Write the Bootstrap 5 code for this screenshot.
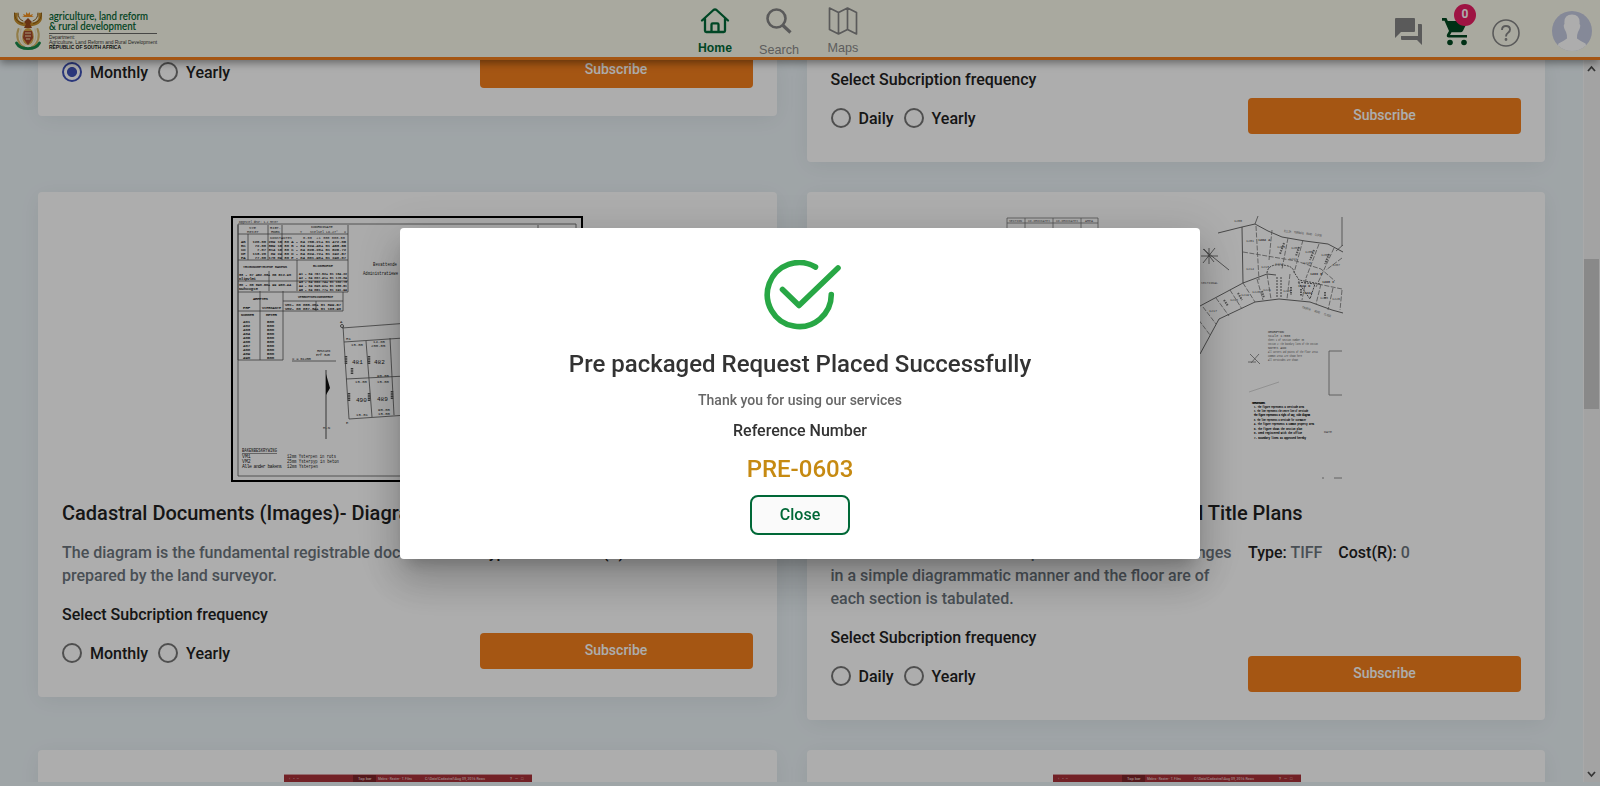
<!DOCTYPE html>
<html lang="en">
<head>
<meta charset="utf-8">
<meta name="viewport" content="width=device-width, initial-scale=1">
<title>Subscriptions</title>
<link rel="stylesheet" href="https://cdn.jsdelivr.net/npm/bootstrap@5.3.0/dist/css/bootstrap.min.css">
<style>
html,body{height:100%;overflow:hidden}
body{font-family:Roboto,sans-serif;font-size:16px;font-weight:500;line-height:23px;color:#212121;background:#ebf3f7}
svg text{white-space:pre}
.topbar{height:60px;background:#fafaeb;border-bottom:3px solid #f37f1d;box-shadow:0 3px 8px rgba(0,0,0,.4);z-index:5;position:relative}
.brand{width:160px;margin-left:13px;margin-top:11px}
.tabs-nav{font-family:"Liberation Sans",sans-serif;font-size:12.6px;line-height:14px;color:#8a8a8a;width:200px;margin-left:510px}
.tabs-nav a{width:64px;color:inherit;text-decoration:none;text-align:center;display:block}
.tabs-nav .active{color:#006837;font-size:12.2px}
.tabs-nav svg,.tools svg{display:block}
.tabs-nav svg{margin:0 auto}
.tools{width:206px}
.count-dot{position:absolute;left:12px;top:-14px;width:22px;height:22px;border-radius:50%;background:#e91e63;color:#fff;font-size:12px;font-weight:700;line-height:21px;text-align:center}
.viewport-area{height:722px;overflow:hidden}
.plans{padding-left:38px;width:1545px;display:grid;grid-template-columns:738.5px 738.5px;column-gap:30px;row-gap:30px;align-items:start}
.plan{background:#fff;border-radius:4px;padding:24px 24px 28px;box-shadow:0 4px 22px rgba(0,0,0,.06)}
.plan.cut{border-radius:0 0 4px 4px;padding-top:0}
.plan h2{font-size:20px;font-weight:500;line-height:24px;margin:19px 0 16px;white-space:nowrap;color:#212121}
.thumb{display:block;margin:0 auto}
.about{width:417.5px;padding-right:12px;color:#6c757d}
.freq{margin-top:16px}
.pick{height:20px;gap:8px;margin-right:10px}
.ring{width:20px;height:20px;border:2px solid #757575;border-radius:50%}
.ring.on{border-color:#3f51b5;background:radial-gradient(circle,#3f51b5 4.6px,transparent 5.4px)}
.choose{margin-top:7px;height:36px}
.choose .picks{width:417.5px;padding-top:4px}
.btn-sub{flex:1;height:36px;border:0;border-radius:4px;background:#f37f1d;color:#fff;font-size:14px;font-weight:500;line-height:32px;padding:0 0 2px}
.rail{width:17px;background:#f1f1f1;border-left:1px solid #fafafa}
.grip{width:15px;height:150px;margin-top:183px;background:#cacaca}
.modal-backdrop{--bs-backdrop-opacity:.32}
.modal-dialog{max-width:800px;width:800px;margin:228px auto 0}
.modal-content{height:331px;border:0;border-radius:4px;color:#333;text-align:center;box-shadow:0 11px 15px -7px rgba(0,0,0,.2),0 24px 38px 3px rgba(0,0,0,.14),0 9px 46px 8px rgba(0,0,0,.12)}
.modal-content h1{font-size:24px;font-weight:500;line-height:30px;margin:18px 0 0}
.done-mark{margin:32px 0 0 6px}
.thanks{font-size:14px;line-height:20px;color:#666;margin-top:11px}
.reflabel{margin-top:9px}
.refno{font-size:24px;line-height:30px;color:#c68a12;margin-top:12px}
.btn-done{width:100px;height:40px;margin-top:11px;border:2px solid #006837;border-radius:8px;background:#fafafa;color:#006837;font-size:16px;font-weight:500;padding:0 0 2px}
</style>
</head>
<body>
<header class="topbar d-flex align-items-start">
  <svg class="brand overflow-visible" height="42" viewBox="0 0 160 42">
    <g fill="none" stroke-linecap="round">
      <path d="M3 3.500C1.500 9 5 13 12 13.500M27 3.500c1.500 5.500-2 9.500-9 10" stroke="#c8902c" stroke-width="3.600"/>
      <path d="M1.500 2c0 6 3 9 8 10.500M28.500 2c0 6-3 9-8 10.500M5 2c0 4 2 7 5 8M25 2c0 4-2 7-5 8" stroke="#8a5a16" stroke-width="1"/>
      <path d="M5.500 18c-3 7-.5 15 5.500 18M24.500 18c3 7 .5 15-5.500 18" stroke="#d8b86a" stroke-width="2"/>
      <path d="M8 18c-2 7 0 13 4 16M22 18c2 7 0 13-4 16" stroke="#f1e6c4" stroke-width="1.400"/>
      <path d="M3.500 32c4 7.500 19 7.500 23 0" stroke="#1a8a4a" stroke-width="2.800"/>
    </g>
    <path d="M9 6l2-1-1-2 3 1 0-3 2 2 2-2 0 3 3-1-1 2 2 1z" fill="#f39322"/>
    <path d="M15 7l4 4-2 2 2 4h-8l2-4-2-2z" fill="#9a4a1c"/>
    <ellipse cx="15" cy="25.500" rx="5.800" ry="8.500" fill="#d9a648"/>
    <path d="M11 20h8l1 7-5 7-5-7z" fill="#a5472b"/>
    <path d="M12 22h6M12 25h6M13 28h4" stroke="#f3e2b0"/>
    <g font-family="'Gill Sans','Lato',sans-serif" font-size="10.500" fill="#00622f" stroke="#00622f" stroke-width=".1">
      <text x="36" y="9.300" textLength="99" lengthAdjust="spacingAndGlyphs">agriculture, land reform</text>
      <text x="36" y="19" textLength="87" lengthAdjust="spacingAndGlyphs">&amp; rural development</text>
    </g>
    <path d="M36 22.500h108" stroke="#444" stroke-width=".8"/>
    <g font-family="'Liberation Sans',sans-serif" font-size="4.900" fill="#333">
      <text x="36" y="27.700" textLength="26">Department:</text>
      <text x="36" y="33" textLength="108" lengthAdjust="spacingAndGlyphs">Agriculture, Land Reform and Rural Development</text>
      <text x="36" y="38.300" font-weight="700" fill="#111" textLength="72" lengthAdjust="spacingAndGlyphs">REPUBLIC OF SOUTH AFRICA</text>
    </g>
  </svg>
  <nav class="tabs-nav d-flex">
    <a href="#" class="fw-bold active"><svg width="30" height="41" viewBox="0 0 30 41" fill="none" stroke="#006837" stroke-width="2.300" stroke-linejoin="round" stroke-linecap="round"><path d="M2 20.500L13.500 10q1.500-1.200 3 0L28 20.500M5 18.500v12.200q0 1.300 1.300 1.300h17.400q1.300 0 1.300-1.300V18.500M11.500 32v-7.500q0-1.200 1.200-1.200h4.600q1.200 0 1.200 1.200V32"/></svg>Home</a>
    <a href="#"><svg width="30" height="43" viewBox="0 0 30 43" fill="none" stroke="#858585" stroke-width="2.600"><circle cx="12.500" cy="18.500" r="9"/><path d="M18.500 25l8 7.500" stroke-width="3.200"/></svg>Search</a>
    <a href="#"><svg width="30" height="41" viewBox="0 0 30 41" fill="none" stroke="#858585" stroke-width="1.700" stroke-linejoin="round"><path d="M1.500 8l9 4.500 9-4.500 9 4.500V34l-9-4.500-9 4.500-9-4.500zM10.500 12.500V34M19.500 8v21.500"/></svg>Maps</a>
  </nav>
  <div class="tools d-flex ms-auto">
    <svg width="28" height="28" viewBox="0 0 28 28" fill="#858585" style="margin-top:17px"><path d="M2 1h18q1 0 1 1v12q0 1-1 1H7l-6 6V2q0-1 1-1z"/><path d="M24 7h3q1 0 1 1v20l-5-5H8q-1 0-1-1v-3h17z"/></svg>
    <div class="position-relative" style="margin:18px 0 0 20px"><svg width="26" height="28" viewBox="0 0 26 28" fill="#00471f"><path d="M0 0h4.500l1.300 3H24q1.600 0 1 1.800l-4 8q-.8 1.500-2.400 1.500H9.500L8 17h17v2.600H7q-3-.4-2-3.200l2-3.300L2.500 2.700H0z"/><circle cx="8" cy="24.500" r="2.800"/><circle cx="22" cy="24.500" r="2.800"/></svg><span class="count-dot">0</span></div>
    <svg width="28" height="28" viewBox="0 0 28 28" fill="none" stroke="#858585" stroke-width="1.600" style="margin:19px 0 0 24px"><circle cx="14" cy="14" r="13"/><path d="M10 11q0-4 4-4t4 3.500q0 2-2 3.200-2 1.200-2 3.800" stroke-width="1.900"/><circle cx="14" cy="20.500" r=".6"/></svg>
    <svg width="40" height="40" viewBox="0 0 40 40" style="margin:11px 0 0 32px"><defs><clipPath id="face"><circle cx="20" cy="20" r="20"/></clipPath></defs><g clip-path="url(#face)"><path fill="#c5cae0" d="M0 0h40v40H0z"/><path fill="#fff" d="M20 3.500q8.500 0 7.500 9.500 1.500 1 0 5-1 2-1.500 3-1 2-1 6.500 4 3 8.500 5l2.500 8H4l2.500-8q4.500-2 8.500-5 0-4.500-1-6.500-.5-1-1.500-3-1.500-4 0-5-1-9.500 7.500-9.500z"/></g></svg>
  </div>
</header>

<div class="d-flex viewport-area">
<main class="flex-grow-1">
 <div class="plans">
  <section class="plan cut">
    <div class="choose d-flex" style="margin-top:-8px"><div class="picks d-flex align-items-center"><label class="pick d-flex align-items-center"><span class="ring on"></span>Monthly</label><label class="pick d-flex align-items-center"><span class="ring"></span>Yearly</label></div><button class="btn-sub">Subscribe</button></div>
  </section>
  <section class="plan cut" style="padding-top:8px">
    <div>Select Subcription frequency</div>
    <div class="choose d-flex"><div class="picks d-flex align-items-center"><label class="pick d-flex align-items-center"><span class="ring"></span>Daily</label><label class="pick d-flex align-items-center"><span class="ring"></span>Yearly</label></div><button class="btn-sub">Subscribe</button></div>
  </section>

  <section class="plan">
    <svg class="thumb" width="352" height="266" viewBox="0 0 352 266">
      <path fill="#fdfdfd" stroke="#000" stroke-width="2" d="M1 1h350v264H1z"/>
      <g fill="none" stroke="#555" stroke-width=".8">
        <path d="M7 8h338v252H7zM7 18h110M7 44h110M7 65h110M7 76h110M7 9v135M37 9v35M51 9v35M66 44v31M117 9v67M112 76v19H52M29 75v69M52 75v69M7 95h45M7 144h45M38 55v20M52 85h60M85 85v10M307 9v12M17 18v26"/>
        <path d="M111 112l241-18M112 110l1 16 5 77 234-16M113 126l239-16M115 163l120-6M135 125l6 76M159 122l4 77M61 145h44"/>
        <path d="M95 154v69" stroke="#222"/>
        <path d="M115 140v8M138 140v8M118 177v8M138 177v8M161 175v8M121 152v6" stroke-dasharray="1.500 .7" stroke-width="2.500"/>
      </g>
      <path fill="#111" d="M95 158l4 14-4 7z"/><circle cx="111" cy="110" r="1.500" fill="#fff" stroke="#222" stroke-width=".7"/>
      <g font-family="'Liberation Mono',monospace" font-size="4" fill="#222">
        <text x="8" y="7" textLength="39" lengthAdjust="spacingAndGlyphs">Opgestel deur: 1.2 Meter</text><text x="18" y="13">SYE</text><text x="16" y="17">Meter</text>
        <text x="39" y="13" textLength="11" lengthAdjust="spacingAndGlyphs">RIGT.</text><text x="40" y="17" textLength="9">HOEK</text><text x="80" y="12" textLength="22">KOORDINATE</text><text x="69" y="17" textLength="46" lengthAdjust="spacingAndGlyphs">Y    Stelsel Lo.27°   X</text>
        <text x="39" y="22.500" textLength="75" lengthAdjust="spacingAndGlyphs">KONSTANTES     0.00  +1 300 000.00</text>
        <g stroke="#222" stroke-width=".15">
        <text x="10" y="27" textLength="105" lengthAdjust="spacingAndGlyphs">AB   120.00 269 15 30 A - 84 705.21+ 61 472.85</text>
        <text x="10" y="31" textLength="105" lengthAdjust="spacingAndGlyphs">BC    72.00 359 15 30 B - 84 824.48+ 61 453.55</text>
        <text x="10" y="35" textLength="105" lengthAdjust="spacingAndGlyphs">CD     7.07 314 15 30 C - 84 825.20+ 61 525.72</text>
        <text x="10" y="39" textLength="105" lengthAdjust="spacingAndGlyphs">DE   113.20  89 24 30 D - 84 824.72+ 61 242.57</text>
        <text x="10" y="43" textLength="105" lengthAdjust="spacingAndGlyphs">EA    77.00 176 09 30 E - 84 801.90+ 61 248.07</text>
        <text x="68" y="59" textLength="48" lengthAdjust="spacingAndGlyphs">A1 - 84 757.62+ 61 164.22</text>
        <text x="68" y="63" textLength="48" lengthAdjust="spacingAndGlyphs">A2 - 84 867.41+ 61 178.04</text>
        <text x="68" y="67" textLength="48" lengthAdjust="spacingAndGlyphs">A3 - 84 862.74+ 61 182.73</text>
        <text x="68" y="71" textLength="48" lengthAdjust="spacingAndGlyphs">A4 - 84 890.92+ 61 236.51</text>
        <text x="68" y="75" textLength="48" lengthAdjust="spacingAndGlyphs">A5 - 84 851.77+ 61 241.94</text>
        <text x="12" y="52" textLength="44" lengthAdjust="spacingAndGlyphs">TRIGONOMETRIESE BAKENS</text><text x="82" y="51" textLength="20" lengthAdjust="spacingAndGlyphs">BLOKHOEKE</text>
        <text x="8" y="59.500" textLength="52" lengthAdjust="spacingAndGlyphs">33 - 87 452.03+ 85 512.90</text><text x="8" y="64.200" textLength="17">Klipvlei</text><text x="8" y="69.500" textLength="52" lengthAdjust="spacingAndGlyphs">30 - 86 690.50+ 99 960.44</text><text x="8" y="74.200" textLength="19">Nuhoogte</text>
        <text x="22" y="84" textLength="15">AREETES</text><text x="67" y="82" textLength="35" lengthAdjust="spacingAndGlyphs">VERBKEYKENINGSMERKE</text><text x="54" y="89.500" textLength="56" lengthAdjust="spacingAndGlyphs">VM1- 80 866.20+ 61 399.57</text><text x="54" y="94" textLength="56" lengthAdjust="spacingAndGlyphs">VM2- 80 837.34+ 61 183.90</text>
        <text x="12" y="93">ERF</text><text x="31" y="93" textLength="19" lengthAdjust="spacingAndGlyphs">VIERKANTE</text><text x="10" y="100" textLength="13" lengthAdjust="spacingAndGlyphs">NOMMER</text><text x="35" y="100" textLength="11">METER</text>
        <text x="12" y="107">481       500</text><text x="12" y="111">482       500</text><text x="12" y="115">483       500</text><text x="12" y="119">484       500</text><text x="12" y="123">485       500</text><text x="12" y="127">486       500</text><text x="12" y="131">487       500</text><text x="12" y="135">488       500</text><text x="12" y="139">489       500</text><text x="12" y="143">490       500</text>
        </g>
        <text x="142" y="50" font-size="5" textLength="24" lengthAdjust="spacingAndGlyphs">Bevattende</text><text x="132" y="59" font-size="5" textLength="35" lengthAdjust="spacingAndGlyphs">Administratiewe</text>
        <text x="61" y="144" textLength="19">X = 61200</text><text x="86" y="135.500" textLength="14">Restant</text><text x="85" y="140" textLength="14">Erf 320</text>
        <text x="109" y="107">A</text><text x="115" y="124">H1</text><text x="120" y="130">15.00</text><text x="142" y="127">14.85</text><text x="140" y="131">200.05</text><text x="124" y="167">15.00</text><text x="146" y="161">90.05</text><text x="146" y="167">15.00</text><text x="125" y="200">15.01</text><text x="147" y="195">90.05</text><text x="147" y="199">15.00</text>
        <text x="121" y="148" font-size="6">481</text><text x="143" y="148" font-size="6">482</text><text x="125" y="186" font-size="6">490</text><text x="146" y="185" font-size="6">489</text>
        <text x="115" y="208">E</text><text x="92" y="213">M.N</text>
        <g font-size="4.800"><text x="11" y="236" text-decoration="underline" textLength="35" lengthAdjust="spacingAndGlyphs">BAKENBESKRYWING</text><text x="11" y="241.500">VM1</text><text x="56" y="241.500" textLength="49" lengthAdjust="spacingAndGlyphs">12mm Ysterpen in rots</text><text x="11" y="246.500">VM2</text><text x="56" y="246.500" textLength="52" lengthAdjust="spacingAndGlyphs">25mm Ysterpyp in beton</text><text x="11" y="251.500" textLength="40">Alle ander bakens</text><text x="56" y="251.500" textLength="31" lengthAdjust="spacingAndGlyphs">12mm Ysterpen</text></g>
      </g>
    </svg>
    <h2>Cadastral Documents (Images)- Diagrams</h2>
    <div class="d-flex"><div class="about">The diagram is the fundamental registrable document prepared by the land surveyor.</div><div>Type: <span class="text-secondary">TIFF</span><span class="ms-3">Cost(R):</span> <span class="text-secondary">0</span></div></div>
    <div class="freq">Select Subcription frequency</div>
    <div class="choose d-flex"><div class="picks d-flex align-items-center"><label class="pick d-flex align-items-center"><span class="ring"></span>Monthly</label><label class="pick d-flex align-items-center"><span class="ring"></span>Yearly</label></div><button class="btn-sub">Subscribe</button></div>
  </section>

  <section class="plan">
    <svg class="thumb" width="352" height="266" viewBox="0 0 352 266">
      <g fill="none" stroke="#777" stroke-width=".8">
        <path d="M7 12V2h91v10M7 7h91M25 2v10M53 2v10M81 2v10"/>
        <path d="M218 17l24-6 13-3 13 7 14 6 23 4 23 3 15 8M242 11l1 56-43 23-24 26M243 67l24-9 9 1M200 138l19-35 36-17 24-3 31 3 22 8 11 3" stroke="#444"/>
        <path d="M342 1v29M255 8l3-8M336 35l7-6" stroke="#666"/>
        <path d="M203 33l26 21M203 47l12-15M204 33l10 13M201 40h17M209 32v16" stroke="#555"/>
        <path stroke-dasharray="5 1.500" d="M243 36l24 4 29 5 25 8 14 12M256 10l3 54M272 14l-3 30M288 22l-6 31M303 24l-9 33M319 28l-13 34M334 32l-18 39M342 42l-16 12M267 58l4 25M257 63l6 21M243 67l12 19M230 74l12 19M216 82l13 18M203 91l13 17M195 99l15 20M290 58l-3 25M306 63l-4 21M321 68l-5 20M333 72l-5 22M342 74l-2 20M318 68l24 5"/>
        <path stroke-dasharray="2 1" d="M267 57q1-9 13-8 13 0 14 7l5 8 21 4M277 61v20M281 61v20M298 66l17 2-5 15z" stroke="#333"/>
        <path stroke-dasharray="1.500 1" stroke-width="2" d="M284 27l-4 11M299 31l-3 9M314 34l-4 10M329 38l-4 10M262 75l2 7M291 71v8M301 73v7M325 76v7M238 77l4 7M224 84l4 6"/>
        <path d="M250 138l10 10M259 138l-8 9M248 146h8"/>
        <path d="M249 176l30-10" stroke="#ccc"/>
        <path d="M342 135h-13v44h13M334 262h8M322 262h2"/>
      </g>
      <g font-family="'Liberation Mono',monospace" font-size="3.400" fill="#555">
        <text x="9" y="6" textLength="13">SECTION</text><text x="28" y="6" textLength="22" lengthAdjust="spacingAndGlyphs">CO-ORDINATES</text><text x="56" y="6" textLength="22" lengthAdjust="spacingAndGlyphs">CO-ORDINATES</text><text x="85" y="6">AREA</text><text x="201" y="68" textLength="17" lengthAdjust="spacingAndGlyphs">SECTIONAL</text>
        <text x="284" y="16" transform="rotate(7 284 16)" textLength="38" lengthAdjust="spacingAndGlyphs">ELLIM  TERRACE  ROAD  CLOSE</text><text x="302" y="92" transform="rotate(18 302 92)" textLength="30" lengthAdjust="spacingAndGlyphs">CHURCH   ROAD   CLOSE</text>
        <g><text x="234" y="6">1200</text><text x="246" y="26">1201</text><text x="258" y="25" font-weight="700">1202 A</text><text x="277" y="32">1203</text><text x="291" y="33">1204</text><text x="305" y="37">1205</text><text x="321" y="40">1206</text><text x="332" y="50">1207</text><text x="246" y="54">1214</text><text x="261" y="52">1213</text><text x="275" y="49">1212</text><text x="289" y="44">1211</text><text x="303" y="48">1210</text><text x="310" y="59" font-weight="700">1209 B</text><text x="322" y="67" font-weight="700">1208 C</text><text x="252" y="77">1220</text><text x="263" y="75">1221</text><text x="283" y="76">1223</text><text x="298" y="71" font-weight="700">1224 D</text><text x="304" y="78" font-weight="700">1224</text><text x="320" y="83">1225</text><text x="332" y="84">1226</text><text x="241" y="80">1219</text><text x="230" y="84.500">1218</text><text x="209" y="96">1217</text></g>
        <g><text x="268" y="117" textLength="16">DESCRIPTION</text><text x="268" y="121">Scale 1:500</text><text x="268" y="125" textLength="36" lengthAdjust="spacingAndGlyphs">Sheet 1 of Section number 30</text><text x="268" y="129" textLength="50" lengthAdjust="spacingAndGlyphs">Section 2: the boundary lines of the section</text><text x="268" y="133">NOTES AND</text><text x="268" y="137" textLength="50" lengthAdjust="spacingAndGlyphs">All corners and points of the floor areas</text><text x="268" y="141" textLength="34" lengthAdjust="spacingAndGlyphs">Common areas are shown here</text><text x="268" y="145" textLength="30" lengthAdjust="spacingAndGlyphs">All servitudes are shown</text></g>
        <g fill="#111" stroke="#111" stroke-width=".2"><text x="252" y="188" textLength="13">SERVITUDES</text><text x="254" y="192" textLength="50" lengthAdjust="spacingAndGlyphs">1. The figure represents a servitude area</text><text x="254" y="196" textLength="54" lengthAdjust="spacingAndGlyphs">2. The line represents the centre line of servitude</text><text x="254" y="200" font-weight="700" textLength="56" lengthAdjust="spacingAndGlyphs">The figure represents a right of way, vide diagram</text><text x="254" y="204.500" textLength="52" lengthAdjust="spacingAndGlyphs">3. The line represents a servitude for stormwater</text><text x="254" y="209" textLength="60" lengthAdjust="spacingAndGlyphs">4. The figure represents a common property area</text><text x="254" y="213.500" textLength="48" lengthAdjust="spacingAndGlyphs">5. The figure shows the section plan</text><text x="254" y="218" textLength="48" lengthAdjust="spacingAndGlyphs">6. Deed registered with the office</text><text x="254" y="222.500" textLength="52" lengthAdjust="spacingAndGlyphs">7. Boundary lines as approved hereby</text></g>
        <text x="324" y="217">DATE</text>
      </g>
    </svg>
    <h2 style="width:472px;text-align:right">Cadastral Documents (Images)- Sectional Title Plans</h2>
    <div class="d-flex"><div class="about pe-0"><div style="width:401px;text-align:right;white-space:nowrap">The sectional title plan reflects all the changes</div>in a simple diagrammatic manner and the floor are of<br>each section is tabulated.</div><div>Type: <span class="text-secondary">TIFF</span><span class="ms-3">Cost(R):</span> <span class="text-secondary">0</span></div></div>
    <div class="freq">Select Subcription frequency</div>
    <div class="choose d-flex"><div class="picks d-flex align-items-center"><label class="pick d-flex align-items-center"><span class="ring"></span>Daily</label><label class="pick d-flex align-items-center"><span class="ring"></span>Yearly</label></div><button class="btn-sub">Subscribe</button></div>
  </section>

  <section class="plan">
    <svg class="thumb" width="248" height="170" viewBox="0 0 248 170" style="position:relative;left:1px"><path fill="#d9a0a4" d="M0 0h248v1H0z"/><path fill="#a83238" d="M0 1h248v169H0z"/><path fill="#7c2428" d="M69 1h23v7H69z"/><g font-family="Roboto,sans-serif" font-size="4" fill="#e4c4c4"><text x="5" y="5.600">‹   •  –</text><text x="74" y="5.600">Top bar</text><text x="94" y="5.600" textLength="34" lengthAdjust="spacingAndGlyphs">Makro · Raster · T. Files</text><text x="141" y="5.600" textLength="60" lengthAdjust="spacingAndGlyphs">C:\Data\Cadastral\Aug 09, 2016 Rows</text><text x="226" y="5.600">?   —   □</text></g></svg>
  </section>
  <section class="plan">
    <svg class="thumb" width="248" height="170" viewBox="0 0 248 170" style="position:relative;left:1px"><path fill="#d9a0a4" d="M0 0h248v1H0z"/><path fill="#a83238" d="M0 1h248v169H0z"/><path fill="#7c2428" d="M69 1h23v7H69z"/><g font-family="Roboto,sans-serif" font-size="4" fill="#e4c4c4"><text x="5" y="5.600">‹   •  –</text><text x="74" y="5.600">Top bar</text><text x="94" y="5.600" textLength="34" lengthAdjust="spacingAndGlyphs">Makro · Raster · T. Files</text><text x="141" y="5.600" textLength="60" lengthAdjust="spacingAndGlyphs">C:\Data\Cadastral\Aug 09, 2016 Rows</text><text x="226" y="5.600">?   —   □</text></g></svg>
  </section>
 </div>
</main>
<div class="rail d-flex flex-column">
  <svg width="15" height="16" viewBox="0 0 15 16" fill="none" stroke="#505050" stroke-width="1.800"><path d="M4 11l3.500-4 3.500 4"/></svg>
  <div class="grip"></div>
  <svg class="mt-auto" width="15" height="16" viewBox="0 0 15 16" fill="none" stroke="#505050" stroke-width="1.800"><path d="M4 6l3.500 4L11 6"/></svg>
</div>
</div>

<div class="modal-backdrop show"></div>
<div class="modal d-block" tabindex="-1" role="dialog">
  <div class="modal-dialog"><div class="modal-content d-flex flex-column align-items-center">
    <svg class="done-mark" width="78" height="71" viewBox="0 0 78 71" fill="none" stroke="#28a745" stroke-width="5.600" stroke-linecap="round" stroke-linejoin="round"><path d="M51.500 7A32 32 0 1 0 67.300 34.500M18.500 29.500l16.500 16L74 8"/></svg>
    <h1>Pre packaged Request Placed Successfully</h1>
    <div class="thanks">Thank you for using our services</div>
    <div class="reflabel">Reference Number</div>
    <div class="refno">PRE-0603</div>
    <button class="btn-done">Close</button>
  </div></div>
</div>
<script src="https://cdn.jsdelivr.net/npm/bootstrap@5.3.0/dist/js/bootstrap.bundle.min.js"></script>
</body>
</html>
